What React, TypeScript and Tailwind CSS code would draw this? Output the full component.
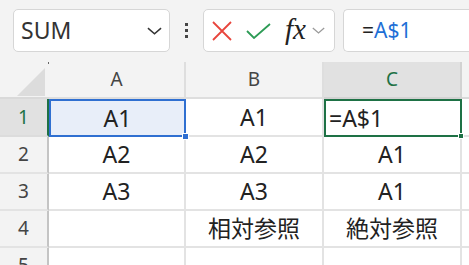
import React from 'react';

const font = { fontFamily: '"Noto Sans", "Noto Sans CJK JP", sans-serif' };

const Chevron: React.FC<{ className?: string }> = ({ className }) => (
  <svg viewBox="0 0 16 8" className={className} fill="none" stroke="currentColor" strokeWidth="1.6">
    <path d="M1 1l7 6 7-6" />
  </svg>
);

const Toolbar: React.FC = () => (
  <div className="flex items-start h-[62px] bg-[#f3f3f3] pt-[9px] pl-[13px] gap-0">
    <div className="flex items-center w-[157px] h-[43px] bg-white border border-[#d6d6d6] rounded-[5px] pl-[7px] pr-[7px]">
      <span className="text-[23px] text-[#333] leading-none flex-1">SUM</span>
      <Chevron className="w-[15px] h-[8px] text-[#333]" />
    </div>
    <div className="flex flex-col items-center justify-center gap-[3px] w-[33px] h-[43px]">
      <span className="w-[3px] h-[3px] bg-[#444]" />
      <span className="w-[3px] h-[3px] bg-[#444]" />
      <span className="w-[3px] h-[3px] bg-[#444]" />
    </div>
    <div className="flex items-center w-[132px] h-[43px] bg-white border border-[#d6d6d6] rounded-[5px] pl-[8px]">
      <svg viewBox="0 0 20 20" className="w-[20px] h-[20px]" fill="none" stroke="#e8453c" strokeWidth="1.8">
        <path d="M1 1l18 18M19 1L1 19" />
      </svg>
      <svg viewBox="0 0 25 16" className="w-[25px] h-[16px] ml-[14px]" fill="none" stroke="#2c9b55" strokeWidth="1.8">
        <path d="M1 8l7 7L24 1" />
      </svg>
      <span
        className="ml-[14px] text-[29px] italic leading-none text-[#222] -mt-[3px]"
        style={{ fontFamily: '"Liberation Serif", "DejaVu Serif", serif' }}
      >
        fx
      </span>
      <Chevron className="w-[13px] h-[7px] ml-[6px] text-[#9a9a9a]" />
    </div>
    <div className="flex items-center flex-1 h-[43px] bg-white border border-r-0 border-[#d6d6d6] rounded-l-[5px] ml-[8px] pl-[18px]">
      <span className="text-[21px] leading-none text-[#222]">=</span>
      <span className="text-[21px] leading-none text-[#1e6fd6]">A$1</span>
    </div>
  </div>
);

const cols = ['A', 'B', 'C'];
const rows: string[][] = [
  ['A1', 'A1', '=A$1'],
  ['A2', 'A2', 'A1'],
  ['A3', 'A3', 'A1'],
  ['', '相対参照', '絶対参照'],
  ['', '', ''],
];

const Grid: React.FC = () => (
  <div className="grid grid-cols-[49px_137px_138px_138px_1fr] grid-rows-[37px_38px_37px_37px_37px_37px] bg-white">
    <div className="relative bg-[#f3f3f3] border-b-2 border-[#d9d9d9]">
      <svg viewBox="0 0 28 28" className="absolute left-[17px] top-[6px] w-[28px] h-[28px]">
        <path d="M28 0V28H0Z" fill="#dcdcdc" />
      </svg>
      <span className="absolute right-0 top-0 w-[1px] h-[2px] bg-[#666]" />
    </div>
    {cols.map((c) => (
      <div
        key={c}
        className={`flex items-center justify-center border-b-2 border-r-2 text-[19px] ${
          c === 'C' ? 'bg-[#e1e1e1] text-[#1e7145] border-[#d2d2d2]' : 'bg-[#f3f3f3] text-[#444] border-[#dedede]'
        }`}
      >
        {c}
      </div>
    ))}
    <div className="bg-[#f3f3f3] border-b-2 border-[#d9d9d9]" />
    {rows.map((r, i) => (
      <React.Fragment key={i}>
        <div
          className={`flex items-center justify-center text-[19px] border-b-2 border-r-2 ${
            i === 0
              ? 'bg-[#e1e1e1] text-[#1e7145] border-b-[#dcdcdc] border-r-[#1e7145]'
              : 'bg-[#f3f3f3] text-[#444] border-b-[#e3e3e3] border-r-[#c4c4c4]'
          }`}
        >
          {i + 1}
        </div>
        {r.map((v, j) => {
          const selA = i === 0 && j === 0;
          const selC = i === 0 && j === 2;
          return (
            <div
              key={j}
              className={`relative flex items-center text-[23px] text-[#222] ${
                selC ? 'justify-start pl-[3px]' : 'justify-center'
              } ${
                selA
                  ? 'bg-[#e8eef9] border-2 border-[#2f6fd1]'
                  : selC
                  ? 'border-2 border-[#1e7145]'
                  : 'border-b-2 border-r-2 border-[#e3e3e3]'
              }`}
            >
              {v}
              {selA && <span className="absolute right-[-5px] bottom-[-5px] w-[7px] h-[7px] bg-[#2f6fd1] border border-white z-10" />}
              {selC && <span className="absolute right-[-4px] bottom-[-4px] w-[6px] h-[6px] bg-[#1e7145] border border-white z-10" />}
            </div>
          );
        })}
        <div className="border-b-2 border-[#e3e3e3]" />
      </React.Fragment>
    ))}
  </div>
);

const App: React.FC = () => (
  <div className="w-[469px] h-[265px] overflow-hidden bg-white" style={font}>
    <Toolbar />
    <Grid />
  </div>
);

export default App;
